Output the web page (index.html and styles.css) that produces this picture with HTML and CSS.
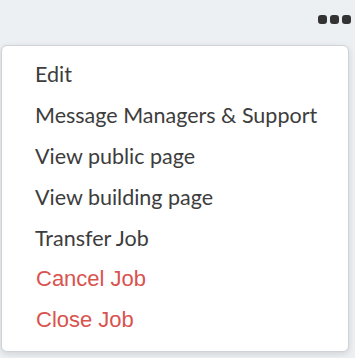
FILE: index.html
```html
<!DOCTYPE html>
<html lang="en">
<head>
  <meta charset="UTF-8">
  <title>Job actions</title>
  <link rel="stylesheet" href="styles.css">
</head>
<body>
  <div class="toolbar">
    <button class="more-btn" aria-label="More actions">
      <span class="dot"></span><span class="dot"></span><span class="dot"></span>
    </button>
  </div>

  <!-- Menu azioni -->
  <ul class="menu">
    <li class="menu-item">Edit</li>
    <li class="menu-item">Message Managers &amp; Support</li>
    <li class="menu-item">View public page</li>
    <li class="menu-item">View building page</li>
    <li class="menu-item">Transfer Job</li>
    <li class="menu-item danger">Cancel Job</li>
    <li class="menu-item danger">Close Job</li>
  </ul>
</body>
</html>
```

FILE: styles.css
```css
body, html {
  margin: 0;
  padding: 0;
  height: 100%;
  background-color: #edf0f3;
  font-family: 'Lato', sans-serif;
  overflow: hidden;
}

.toolbar {
  display: flex;
  justify-content: flex-end;
  padding: 15px 4px 0 0;
  height: 15px;
}

.more-btn {
  display: flex;
  gap: 3px;
  padding: 0;
  border: none;
  background: none;
}

.dot {
  width: 9px;
  height: 9px;
  border-radius: 3px;
  background-color: #333;
}

.menu {
  list-style: none;
  margin: 15px 0 0 1px;
  padding: 10px 0 8px 0;
  width: 346px;
  background-color: #fff;
  border: 1px solid #cfd2d6;
  border-radius: 6px;
  box-shadow: 0 2px 6px rgba(0, 0, 0, 0.12);
}

.menu-item {
  padding: 0 20px 0 33px;
  height: 41px;
  line-height: 36px;
  font-size: 21.5px;
  color: #3d3d3d;
  white-space: nowrap;
}

.menu-item.danger {
  font-family: 'Liberation Sans', Arial, sans-serif;
  font-size: 22px;
  color: #d9534f;
  padding-left: 34px;
}
```
